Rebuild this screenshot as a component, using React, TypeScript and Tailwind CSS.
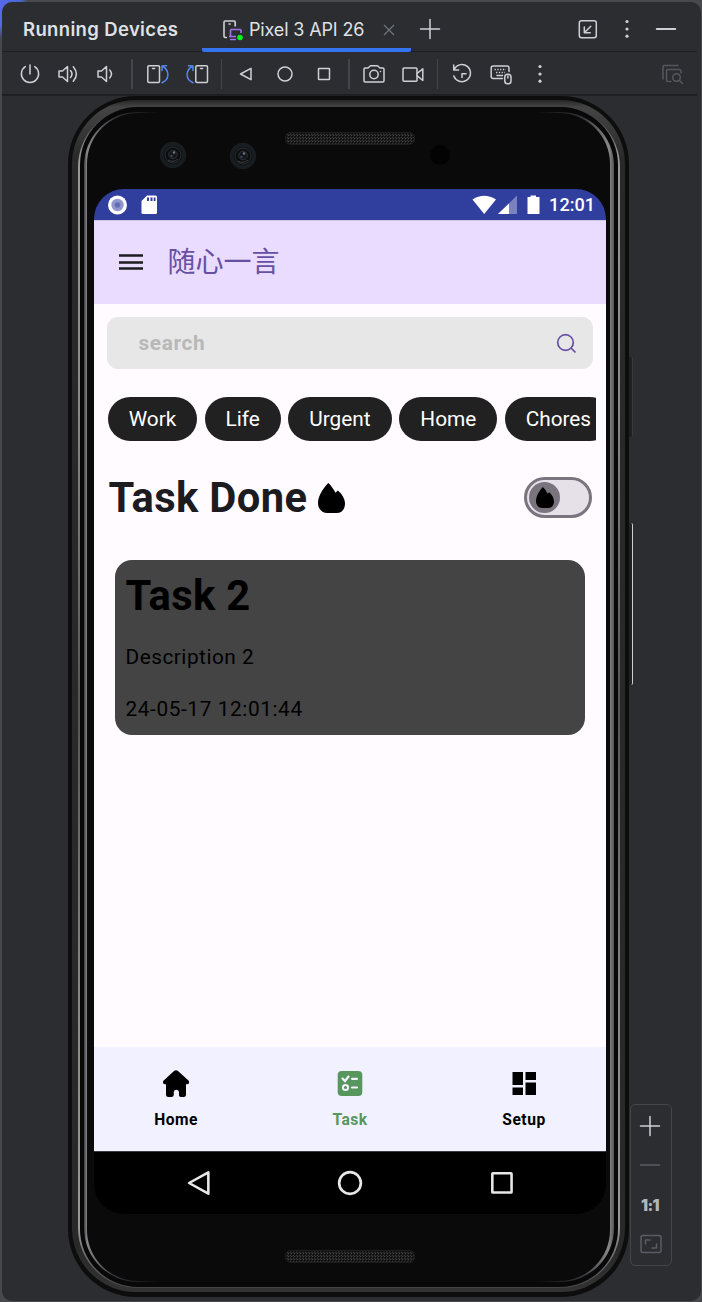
import React from "react";

type IconProps = { children: React.ReactNode; size?: number; className?: string };

const Icon = ({ children, size = 24, className = "" }: IconProps) => (
  <svg
    width={size}
    height={size}
    viewBox="0 0 24 24"
    fill="none"
    stroke="currentColor"
    strokeWidth={1.5}
    strokeLinecap="round"
    strokeLinejoin="round"
    className={"shrink-0 " + className}
  >
    {children}
  </svg>
);

const Tool = ({ children, narrow = false }: { children: React.ReactNode; narrow?: boolean }) => (
  <div className={(narrow ? "w-[38px]" : "w-[39px]") + " flex shrink-0 justify-center"}>
    <Icon>{children}</Icon>
  </div>
);

const Separator = ({ className }: { className: string }) => (
  <div className={"flex shrink-0 justify-center " + className}>
    <div className="h-[30px] w-[1.5px] bg-[#43454a]" />
  </div>
);

const DOTS = (
  <g fill="currentColor" stroke="none">
    <circle cx="12" cy="4.5" r="1.6" />
    <circle cx="12" cy="12" r="1.6" />
    <circle cx="12" cy="19.2" r="1.6" />
  </g>
);

const Flame = ({ width, height }: { width: number; height: number }) => (
  <svg width={width} height={height} viewBox="0 0 27 30" preserveAspectRatio="none" className="shrink-0">
    <path d="M10.400 0C8 2 0 11.500 0 20C0 26 4 30 9.500 30H18.500C24 30 27 26 27 20.500C27 15.500 23.500 10.500 19.800 7.600L17.500 9.700C15.500 6 13 2.500 10.400 0Z" fill="#000" />
  </svg>
);

function Header() {
  return (
    <div className="flex h-[50px] shrink-0 border-b border-[#1e1f22]">
      <div className="flex w-[200px] shrink-0 items-center pt-[6px] pl-[21px] text-[18.5px] font-semibold tracking-[0.350px] whitespace-nowrap text-[#dfe1e5]">
        Running Devices
      </div>
      <div className="flex h-[50px] w-[209px] shrink-0 items-center rounded-b-[2px] border-b-[4px] border-[#3574f0] pt-[9px] pl-[20px] text-[18px] text-[#dfe1e5]">
        <svg width="22" height="22" viewBox="0 0 22 22" fill="none" strokeWidth="1.6" className="shrink-0">
          <path d="M5 18.500H3.200Q2 18.500 2 17.300V3.200Q2 2 3.200 2H12Q13.200 2 13.200 3.200V7.500M6.500 5H8.700" stroke="#ced0d6" />
          <path d="M8.500 17.500V11.500Q8.500 10.500 9.500 10.500H18Q19 10.500 19 11.500V14M7 17.500H14M8 20.500H14" stroke="#a571e6" />
          <circle cx="18" cy="18.500" r="2.800" fill="#00f41c" />
        </svg>
        <span className="ml-[5px] w-[115px] tracking-[-0.150px] whitespace-nowrap">Pixel 3 API 26</span>
        <svg width="12" height="12" viewBox="0 0 12 12" stroke="#6f737a" strokeWidth="1.300" className="ml-[19px] shrink-0">
          <path d="M1 1L11 11M11 1L1 11" />
        </svg>
      </div>
      <div className="flex flex-1 items-center pt-[4px] pr-[19px] pl-[7px] text-[#ced0d6]">
        <Icon><path d="M2.500 12H21.500M12 2.500V21.500" /></Icon>
        <div className="flex-1" />
        <Icon className="mr-[15px]">
          <rect x="3.300" y="3.800" width="17" height="17" rx="2.200" />
          <path d="M14.800 9.300L8.300 15.800M8.300 10V15.800H14.200" />
        </Icon>
        <Icon className="mr-[15px]">{DOTS}</Icon>
        <Icon><path d="M2.700 12H21.300" strokeWidth="1.800" /></Icon>
      </div>
    </div>
  );
}

function Toolbar() {
  return (
    <div className="flex h-[44px] shrink-0 items-center border-b-2 border-[#1e1f22] pt-[2px] pl-[9px] text-[#ced0d6]">
      <Tool narrow>
        <path d="M12 3V12M7.300 4.600A8.600 8.600 0 1 0 16.700 4.600" />
      </Tool>
      <Tool narrow>
        <path d="M3 9H6.500L11.500 4.500V19.500L6.500 15H3ZM14.500 8.500Q17.500 12 14.500 15.500M17.300 4.700Q23.500 12 17.300 19.300" />
      </Tool>
      <Tool narrow>
        <path d="M4 9H7.500L12.500 4.500V19.500L7.500 15H4ZM15.700 8Q19.300 12 15.700 16" />
      </Tool>
      <Separator className="w-[13.400px] pl-px" />
      <Tool>
        <rect x="1.800" y="3.800" width="11.700" height="16.700" rx="1.200" />
        <path d="M6.500 6.500H8.700" />
        <path d="M16 20.700C23.500 17.500 24 9 16.500 4.200M20.500 3.700L16 3.900V8.500" stroke="#548af7" />
      </Tool>
      <Tool>
        <rect x="10.800" y="3.800" width="11.700" height="16.700" rx="1.200" />
        <path d="M15.500 6.500H17.700" />
        <path d="M8 20.700C0.500 17.500 0 9 7.500 4.200M3.500 3.700L8 3.900V8.500" stroke="#548af7" />
      </Tool>
      <Separator className="w-[10px]" />
      <Tool><path d="M6.500 12L17 6.300V17.700Z" /></Tool>
      <Tool><circle cx="12" cy="12" r="7" /></Tool>
      <Tool><rect x="6.500" y="6.600" width="11" height="11" rx="0.500" /></Tool>
      <Separator className="w-[11px]" />
      <Tool>
        <path d="M3.200 6H6L8.500 3.800H15.500L18 6H20.800Q22 6 22 7.200V18.800Q22 20 20.800 20H3.200Q2 20 2 18.800V7.200Q2 6 3.200 6Z" />
        <circle cx="12" cy="12.500" r="4.200" />
        <circle cx="18.500" cy="9.500" r="0.800" fill="currentColor" stroke="none" />
      </Tool>
      <Tool>
        <rect x="2" y="6" width="14" height="13.200" rx="1" />
        <path d="M16 11.500L21.800 6.800V18.500L16 13.700" />
      </Tool>
      <Separator className="w-[10px]" />
      <Tool>
        <path d="M4.200 7.200A8.600 8.600 0 1 1 3.800 14M3.700 3V8H8.700M12 15.500V11.700H16" />
      </Tool>
      <Tool>
        <path d="M13.500 16.500H4.200Q2.200 16.500 2.200 14.500V6Q2.200 4 4.200 4H18Q20 4 20 6V9.500" />
        <path d="M5.500 7.500H17M7 10.500H16" strokeDasharray="1.300 1.500" strokeLinecap="butt" strokeWidth="1.700" />
        <path d="M8 13.500H13.500" />
        <rect x="15.800" y="12.300" width="6.200" height="9.500" rx="2.800" />
        <path d="M18.900 14V16" />
      </Tool>
      <Tool>{DOTS}</Tool>
      <div className="flex-1" />
      <Icon className="mr-[13px] text-[#55575c]">
        <path d="M3 17V5Q3 3.500 4.500 3.500H18M11 19.500H8Q6.500 19.500 6.500 18V9Q6.500 7.500 8 7.500H19.500Q21 7.500 21 9V11" />
        <circle cx="16.500" cy="15.500" r="3.800" />
        <path d="M19.500 18.500L22.500 21.500" />
      </Icon>
    </div>
  );
}

const Camera = ({ className }: { className: string }) => (
  <svg width="28" height="28" viewBox="0 0 28 28" className={"shrink-0 " + className}>
    <circle cx="14" cy="14" r="13.200" fill="#181d21" />
    <circle cx="14" cy="14" r="9.300" fill="#0c0d0f" />
    <circle cx="14" cy="14" r="8" fill="none" stroke="#25272a" strokeWidth="1.300" />
    <circle cx="14" cy="13.500" r="4.300" fill="#15171a" stroke="#2c333a" />
    <circle cx="15" cy="11.500" r="1.200" fill="#75777d" />
    <circle cx="12.500" cy="15" r="1.200" fill="#3a4552" />
    <path d="M9 19Q14 22 19 18" fill="none" stroke="#3c3e41" />
  </svg>
);

const Grille = ({ className }: { className: string }) => (
  <svg width="130" height="13" className={"shrink-0 " + className}>
    <defs>
      <pattern id="mesh" width="3" height="3" patternUnits="userSpaceOnUse">
        <rect width="3" height="3" fill="#1c1c1c" />
        <rect width="1" height="1" fill="#424242" />
        <rect x="1" y="1" width="1" height="1" fill="#050505" />
        <rect x="2" y="2" width="1" height="1" fill="#333" />
      </pattern>
    </defs>
    <rect x="0.500" y="0.500" width="129" height="12" rx="5" fill="url(#mesh)" stroke="#1d1d1d" />
  </svg>
);

function StatusBar() {
  return (
    <div className="flex h-[31px] shrink-0 items-center bg-[#303e9e] pr-[11px] pl-[13px]">
      <svg width="20" height="20" viewBox="0 0 20 20">
        <circle cx="10.500" cy="10" r="9.500" fill="#fff" />
        <circle cx="10.500" cy="10" r="6.200" fill="#8f97cc" />
        <circle cx="10.500" cy="10" r="2.800" fill="#626db6" />
      </svg>
      <svg width="16" height="20" viewBox="0 0 16 20" className="ml-[14px]">
        <path d="M6 0.500H14.500Q16 0.500 16 2V17.500Q16 19 14.500 19H2Q0.500 19 0.500 17.500V6Z" fill="#fff" />
        <path d="M6 2.500H8V6H6ZM9.500 2.500H11.500V6H9.500ZM12.700 2.500H14.500V6H12.700Z" fill="#303e9e" />
      </svg>
      <div className="flex-1" />
      <svg width="72" height="20" viewBox="0 0 72 20">
        <path d="M0.500 4.500Q12 -3 24 4.500L12.200 19Z" fill="#fff" />
        <path d="M45 0.500V19H26Z" fill="#7a82bf" />
        <path d="M37 8.500V19H26Z" fill="#fff" />
        <path d="M58.500 0.500H64V2H67.500V19H55.500V2H58.500Z" fill="#fff" />
      </svg>
      <span className="w-[51px] pt-[2px] text-right font-[Roboto] text-[18.100px] leading-none font-medium text-white">12:01</span>
    </div>
  );
}

function AppBar() {
  return (
    <div className="flex h-[84px] shrink-0 items-center border-t border-[#cfc5ea] bg-[#eadcfe] pl-[24.500px]">
      <svg width="24" height="18" viewBox="0 0 24 18" className="mb-[2px] shrink-0">
        <path d="M0 2.500H24M0 9.500H24M0 15.500H24" stroke="#1c1b1f" strokeWidth="2.500" />
      </svg>
      <h1 className="ml-[25px] pb-[6px] font-['Noto_Sans_CJK_SC',sans-serif] text-[28px] leading-none font-normal text-[#6750a4]">
        随心一言
      </h1>
    </div>
  );
}

const CHIPS: [string, string][] = [
  ["Work", "w-[89px]"],
  ["Life", "w-[76px]"],
  ["Urgent", "w-[103.500px]"],
  ["Home", "w-[98px]"],
  ["Chores", "w-[107px]"],
];

function Content() {
  return (
    <div className="flex flex-1 flex-col bg-[#fffbfe]">
      <div className="mx-[13px] mt-[13px] flex h-[52px] shrink-0 items-center justify-between rounded-[11px] bg-[#e7e7e7] pr-[15px] pl-[31.500px]">
        <span className="pt-[2px] text-[20.800px] font-bold tracking-[0.650px] text-[#b8b8b8]">search</span>
        <svg width="23" height="23" viewBox="0 0 23 23" fill="none" stroke="#6750a4" strokeWidth="1.700">
          <circle cx="10.500" cy="10.500" r="7.800" />
          <path d="M16 16L20.500 20.500" />
        </svg>
      </div>
      <div className="mt-[28px] mr-[10px] ml-[14px] flex h-[44px] shrink-0 gap-[7.600px] overflow-hidden">
        {CHIPS.map(([label, width]) => (
          <div key={label} className={"flex shrink-0 items-center justify-center rounded-full bg-[#212121] pt-[2px] text-[20.800px] text-white " + width}>
            {label}
          </div>
        ))}
      </div>
      <div className="mt-[36px] flex h-[41px] shrink-0 items-center pr-[14px] pl-[14.500px]">
        <h2 className="w-[209.500px] pt-px text-[41.700px] leading-none font-bold tracking-[0.350px] whitespace-nowrap text-[#1c1b1f]">Task Done</h2>
        <Flame width={27} height={30} />
        <div className="flex-1" />
        <div className="flex h-[41px] w-[68px] items-center rounded-full border-[3px] border-[#79747e] bg-[#e6e0e9] pl-[2px]">
          <div className="flex size-[31px] items-center justify-center rounded-full bg-[#79747e]">
            <Flame width={18} height={21} />
          </div>
        </div>
      </div>
      <div className="mx-[21px] mt-[42px] flex h-[175px] shrink-0 flex-col rounded-[17px] bg-[#444] pt-[15px] pl-[10.500px] text-black">
        <h3 className="text-[41.700px] leading-[42px] font-bold tracking-[0.350px]">Task 2</h3>
        <p className="mt-[27px] text-[20.800px] leading-[26px] tracking-[0.500px]">Description 2</p>
        <p className="mt-[26px] text-[20.800px] leading-[26px] tracking-[0.600px]">24-05-17 12:01:44</p>
      </div>
    </div>
  );
}

const NavItem = ({ label, active = false, children }: { label: string; active?: boolean; children: React.ReactNode }) => (
  <div className={"flex w-[174px] shrink-0 flex-col items-center pt-[21px] " + (active ? "text-[#57965c]" : "text-black")}>
    <svg width="30" height="30" viewBox="0 0 30 30" fill="currentColor">{children}</svg>
    <span className="mt-[12px] text-[15.600px] leading-[20px] font-bold tracking-[0.500px]">{label}</span>
  </div>
);

function BottomNav() {
  return (
    <div className="flex h-[105px] shrink-0 justify-center border-b border-[#3c3c40] bg-[#f2f1ff]">
      <NavItem label="Home">
        <path d="M13.300 2.800Q15 1.500 16.700 2.800L27.500 12.600Q28.600 13.700 28 15.200Q27.500 16.200 26 16.200H25V26.500Q25 29 22.500 29H20Q18.500 29 18 27.500V24Q17.500 21.800 15.500 21.800Q13 21.800 12.800 24V27Q12.500 29 10.500 29H7.500Q5 29 5 26.500V16.200H4Q2.500 16.200 2 14.700Q1.700 13.500 2.700 12.600Z" />
      </NavItem>
      <NavItem label="Task" active>
        <rect x="2.700" y="3" width="24.600" height="25" rx="4" />
        <path d="M7.500 10.500L10 13L13.500 8.500M17 10.800H22M17 19.500H22" fill="none" stroke="#f2f1ff" strokeWidth="2.200" strokeLinecap="round" />
        <circle cx="10.500" cy="19.500" r="2.600" fill="none" stroke="#f2f1ff" strokeWidth="2" />
      </NavItem>
      <NavItem label="Setup">
        <path d="M3.500 4H14V17H3.500ZM16.500 4H27V12H16.500ZM3.500 19.500H14V27H3.500ZM16.500 14.500H27V27H16.500Z" />
      </NavItem>
    </div>
  );
}

function SystemNav() {
  return (
    <div className="flex h-[62px] shrink-0 items-center justify-between bg-black px-[90.500px]">
      <Icon size={28} className="text-[#e8e8e8]"><path d="M3.500 12L20 2.800V21.200Z" strokeWidth="2.200" /></Icon>
      <Icon size={28} className="text-[#e8e8e8]"><circle cx="12" cy="12" r="9.300" strokeWidth="2.300" /></Icon>
      <Icon size={28} className="text-[#e8e8e8]"><rect x="3.700" y="3.700" width="16.500" height="16.500" rx="0.500" strokeWidth="2.200" /></Icon>
    </div>
  );
}

function Phone() {
  return (
    <div className="relative ml-[66px] h-[1201px] w-[561px] shrink-0">
      <div className="absolute top-[261px] -right-[4px] h-[80px] w-[6px] rounded-[2px] border-r border-[#3b3b3b] bg-[#202020]" />
      <div className="absolute top-[427px] -right-[4px] h-[162px] w-[6px] rounded-[2px] border-r border-[#cfcfcf] bg-[#222]" />
      <div className="relative h-full rounded-[68px] bg-[#0d0d0d] pt-[4px] pr-[4px] pb-[5px] pl-[4px]">
        <div className="h-full rounded-[64px] bg-[linear-gradient(#262626,#444_7px,#292929_60px,#292929_1150px,#333)] pt-[7px] pr-[5px] pb-[4px] pl-[6px]">
          <div className="h-full rounded-[60px] bg-[linear-gradient(#333,#999_50px,#898989_300px,#555_600px,#898989_900px,#999_1120px,#444)] px-[2px] pb-px">
            <div className="h-full rounded-[58px] bg-[#080808] px-[4px] pt-[5px] pb-[5px]">
              <div className="h-full rounded-[54px] bg-[linear-gradient(to_right,#3c3c44,#888_3px,#38383e_30px,#0a0a0a_75px,#0a0a0a_452px,#38383e_500px,#888_525px,#555)] pt-px pr-[4px] pb-px pl-[3px]">
                <div className="flex h-full flex-col rounded-[51px] bg-[#0a0a0a] pr-[4px] pl-[7px]">
                  <div className="flex h-[76px] shrink-0">
                    <Camera className="mt-[28px] ml-[65px]" />
                    <Camera className="mt-[29px] ml-[42px]" />
                    <Grille className="mt-[19px] ml-[28px]" />
                    <div className="mt-[32px] ml-[15px] size-[20px] rounded-full bg-[#030304]" />
                  </div>
                  <div className="flex h-[1025px] w-[512px] shrink-0 flex-col overflow-hidden rounded-[30px] font-[Roboto,sans-serif]">
                    <StatusBar />
                    <AppBar />
                    <Content />
                    <BottomNav />
                    <SystemNav />
                  </div>
                  <Grille className="mt-[36px] ml-[191px]" />
                </div>
              </div>
            </div>
          </div>
        </div>
      </div>
    </div>
  );
}

function ZoomControls() {
  return (
    <div className="absolute top-[1104px] left-[630px] flex h-[162px] w-[42px] flex-col items-center rounded-[5px] border border-[#43454a] bg-[#2b2d30] pr-[2px] text-[#ced0d6]">
      <Icon className="mt-[9px]"><path d="M2.500 12H21.500M12 2.500V21.500" /></Icon>
      <Icon className="mt-[15px] text-[#5a5d63]"><path d="M2.500 12H21.500" /></Icon>
      <span className="mt-[18px] h-[22px] text-[15.500px] leading-[22px] font-black tracking-[-0.600px] text-[#b4b6bb]">1:1</span>
      <Icon className="mt-[15px] ml-[2px] text-[#5a5d63]">
        <rect x="2" y="3.500" width="20" height="17" rx="2" />
        <path d="M6.500 12V8H11M17.500 12V16H13" />
      </Icon>
    </div>
  );
}

export default function App() {
  return (
    <div className="relative h-[1302px] w-[702px] overflow-hidden bg-[linear-gradient(to_right,#5868e8_0,#4668d8_20px,#48494c_28px)] font-[Inter,sans-serif]">
      <div className="h-full bg-[linear-gradient(transparent_0,transparent_25px,#48494c_38px)] pt-[2px] pr-px pb-px pl-[2px]">
        <div className="flex h-full flex-col overflow-hidden rounded-[10px] bg-[#2b2d30]">
          <div className="mr-[4px] flex flex-col">
            <Header />
            <Toolbar />
          </div>
          <Phone />
        </div>
      </div>
      <ZoomControls />
    </div>
  );
}
